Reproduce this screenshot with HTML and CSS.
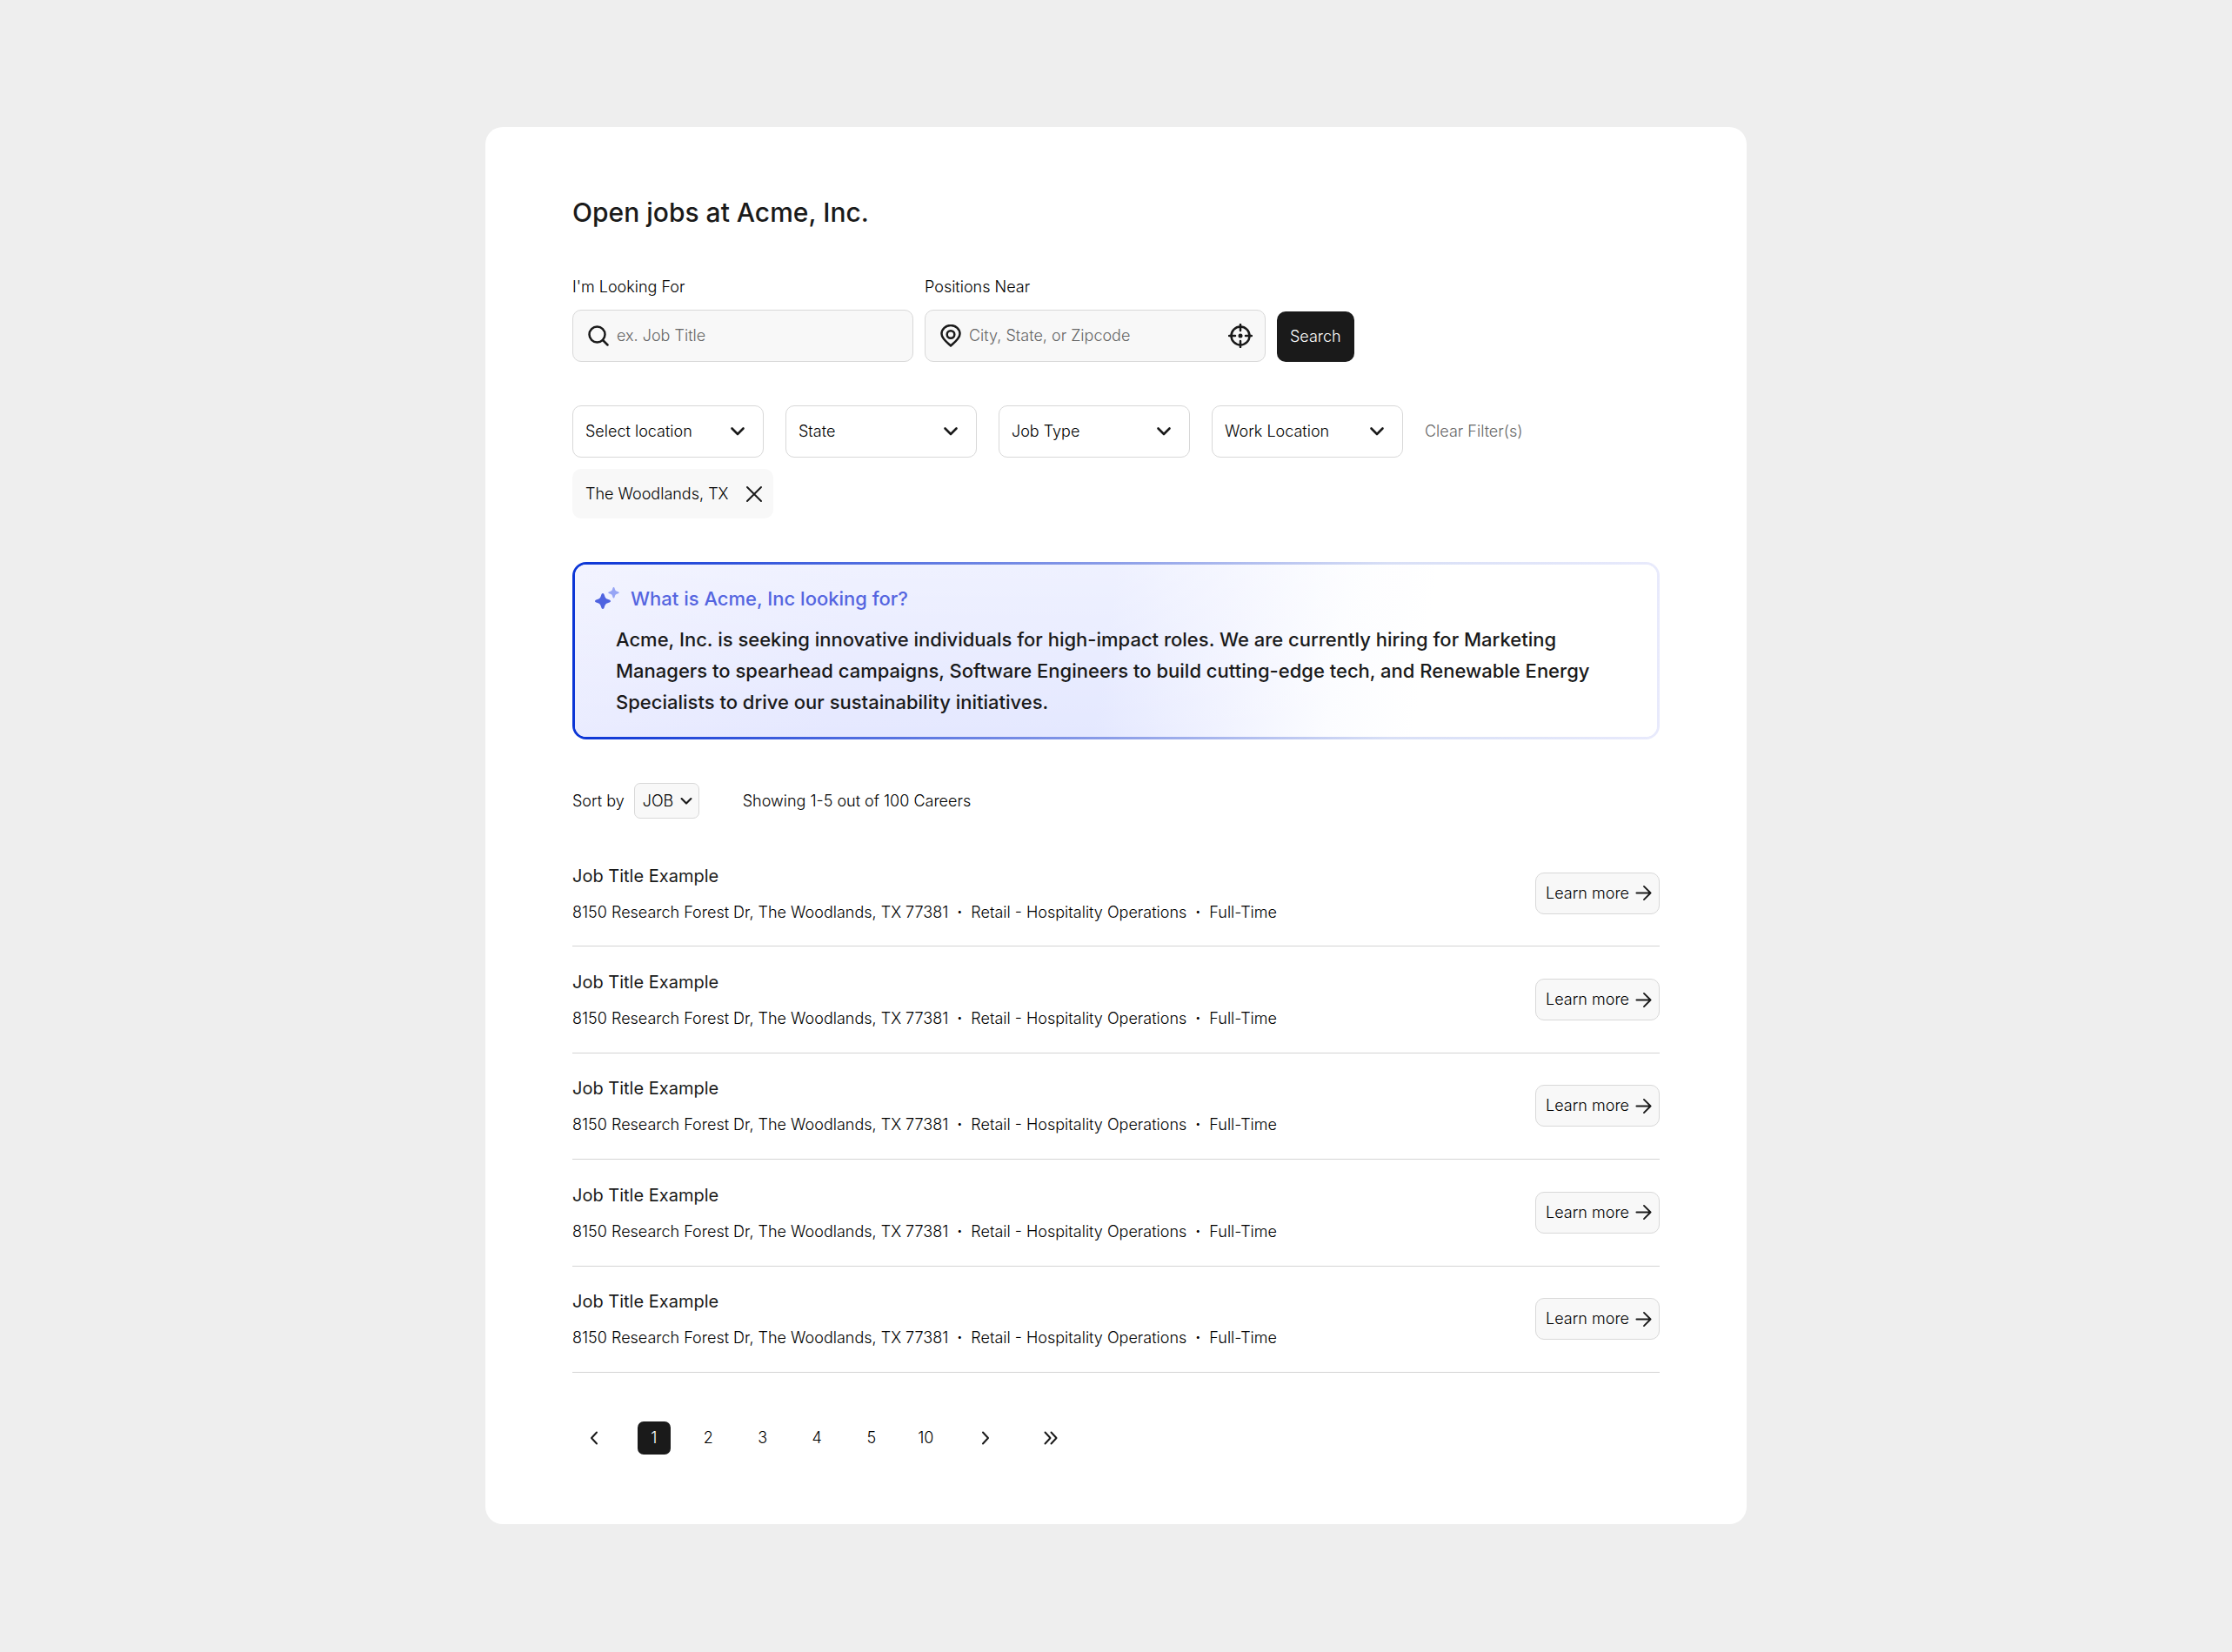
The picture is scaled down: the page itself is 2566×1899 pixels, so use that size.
FILE: index.html
```html
<!DOCTYPE html>
<html lang="en">
<head>
<meta charset="utf-8">
<meta name="viewport" content="width=device-width, initial-scale=1">
<title>Open jobs at Acme, Inc.</title>
<link rel="stylesheet" href="styles.css">
</head>
<body>
<svg class="sprite" aria-hidden="true">
  <symbol id="chevron" viewBox="0 0 24 24"><path d="M5.5 8.5l6.500 6.500 6.500-6.500"/></symbol>
  <symbol id="arrow" viewBox="0 0 20 20"><path d="M1.500 10h17M10.500 2l8 8-8 8"/></symbol>
  <symbol id="angle" viewBox="0 0 20 20"><path d="M7 3.500l6 6.500-6 6.500"/></symbol>
</svg>
<main class="card">
  <h1 class="page-title">Open jobs at Acme, Inc.</h1>

  <form class="search">
    <div class="field">
      <label for="keyword">I'm Looking For</label>
      <div class="textbox">
        <svg class="icon" viewBox="0 0 26 26"><circle cx="11.500" cy="11.500" r="9"/><path d="M18 18l5.500 5.500"/></svg>
        <input id="keyword" type="text" placeholder="ex. Job Title">
      </div>
    </div>
    <div class="field">
      <label for="near">Positions Near</label>
      <div class="textbox">
        <svg class="icon" viewBox="0 0 26 26"><path d="M13 24.500C8.500 20.500 2.500 16 2.500 10.800a10.500 9.800 0 0 1 21 0C23.500 16 17.500 20.500 13 24.500z"/><circle cx="13" cy="11.500" r="4.300"/></svg>
        <input id="near" type="text" placeholder="City, State, or Zipcode">
        <button class="locate" type="button" aria-label="Use my location">
          <svg class="target" viewBox="0 0 28 28"><circle cx="14" cy="14" r="10.500"/><path d="M14 1v7M14 20v7M1 14h7M20 14h7"/><circle class="dot" cx="14" cy="14" r="2.500"/></svg>
        </button>
      </div>
    </div>
    <button class="search-button" type="button">Search</button>
  </form>

  <div class="filters">
    <div class="dropdown">
      <select aria-label="Location"><option>Select location</option></select>
      <svg class="chevron"><use href="#chevron"/></svg>
    </div>
    <div class="dropdown">
      <select aria-label="State"><option>State</option></select>
      <svg class="chevron"><use href="#chevron"/></svg>
    </div>
    <div class="dropdown">
      <select aria-label="Job type"><option>Job Type</option></select>
      <svg class="chevron"><use href="#chevron"/></svg>
    </div>
    <div class="dropdown">
      <select aria-label="Work location"><option>Work Location</option></select>
      <svg class="chevron"><use href="#chevron"/></svg>
    </div>
    <button class="clear" type="button">Clear Filter(s)</button>
  </div>
  <div class="chips">
    <button class="chip" type="button">The Woodlands, TX
      <svg class="close" viewBox="0 0 20 20"><path d="M2 2l16 16M18 2L2 18"/></svg>
    </button>
  </div>

  <section class="insight">
    <h2 class="insight-title">
      <svg class="sparkle" viewBox="0 0 30 26">
        <path class="big" d="M10 7c1 0 1.400.7 1.800 2 .9 3.300 1.700 4.100 5 5.200 1.300.4 2.200.8 2.200 1.800s-.9 1.400-2.200 1.800c-3.300 1.100-4.100 1.900-5 5.200-.4 1.300-.8 2-1.800 2s-1.400-.7-1.800-2c-.9-3.300-1.700-4.100-5-5.200C1.900 17.400 1 17 1 16s.9-1.400 2.200-1.800c3.300-1.100 4.100-1.900 5-5.200C8.600 7.700 9 7 10 7z"/>
        <path class="little" d="M22.500 0c.7 0 1 .7 1.200 1.500.6 2.300 1.200 2.900 3.300 3.500.9.300 1.700.6 1.700 1.300s-.8 1-1.700 1.300c-2.100.6-2.700 1.200-3.300 3.500-.2.800-.5 1.500-1.200 1.500s-1-.7-1.200-1.500c-.6-2.300-1.200-2.900-3.300-3.500-.9-.3-1.700-.6-1.700-1.300s.8-1 1.700-1.300c2.100-.6 2.700-1.200 3.300-3.500.2-.8.500-1.500 1.200-1.500z"/>
      </svg>
      What is Acme, Inc looking for?
    </h2>
    <p class="insight-text">Acme, Inc. is seeking innovative individuals for high-impact roles. We are currently hiring for Marketing Managers to spearhead campaigns, Software Engineers to build cutting-edge tech, and Renewable Energy Specialists to drive our sustainability initiatives.</p>
  </section>

  <div class="toolbar">
    <label for="sort">Sort by</label>
    <div class="dropdown small">
      <select id="sort"><option>JOB</option></select>
      <svg class="chevron"><use href="#chevron"/></svg>
    </div>
    <p class="count">Showing 1-5 out of 100 Careers</p>
  </div>

  <ul class="jobs">
    <li class="job">
      <div class="job-text"><h3>Job Title Example</h3><p class="meta"><span>8150 Research Forest Dr, The Woodlands, TX 77381</span><span>Retail - Hospitality Operations</span><span>Full-Time</span></p></div>
      <a class="more" href="#">Learn more<svg class="arrow"><use href="#arrow"/></svg></a>
    </li>
    <li class="job">
      <div class="job-text"><h3>Job Title Example</h3><p class="meta"><span>8150 Research Forest Dr, The Woodlands, TX 77381</span><span>Retail - Hospitality Operations</span><span>Full-Time</span></p></div>
      <a class="more" href="#">Learn more<svg class="arrow"><use href="#arrow"/></svg></a>
    </li>
    <li class="job">
      <div class="job-text"><h3>Job Title Example</h3><p class="meta"><span>8150 Research Forest Dr, The Woodlands, TX 77381</span><span>Retail - Hospitality Operations</span><span>Full-Time</span></p></div>
      <a class="more" href="#">Learn more<svg class="arrow"><use href="#arrow"/></svg></a>
    </li>
    <li class="job">
      <div class="job-text"><h3>Job Title Example</h3><p class="meta"><span>8150 Research Forest Dr, The Woodlands, TX 77381</span><span>Retail - Hospitality Operations</span><span>Full-Time</span></p></div>
      <a class="more" href="#">Learn more<svg class="arrow"><use href="#arrow"/></svg></a>
    </li>
    <li class="job">
      <div class="job-text"><h3>Job Title Example</h3><p class="meta"><span>8150 Research Forest Dr, The Woodlands, TX 77381</span><span>Retail - Hospitality Operations</span><span>Full-Time</span></p></div>
      <a class="more" href="#">Learn more<svg class="arrow"><use href="#arrow"/></svg></a>
    </li>
  </ul>

  <nav class="pages" aria-label="Pages">
    <a href="#" aria-label="Previous page"><svg class="angle flip"><use href="#angle"/></svg></a>
    <a class="current" href="#" aria-current="page">1</a>
    <a href="#">2</a>
    <a href="#">3</a>
    <a href="#">4</a>
    <a href="#">5</a>
    <a href="#">10</a>
    <a href="#" aria-label="Next page"><svg class="angle"><use href="#angle"/></svg></a>
    <a href="#" aria-label="Last page"><svg class="angle" viewBox="0 0 20 20"><path d="M3.500 3.500l6 6.500-6 6.500M10.500 3.500l6 6.500-6 6.500"/></svg></a>
  </nav>
</main>
</body>
</html>
```
FILE: styles.css
```css
*, *::before, *::after { box-sizing: border-box; }

body {
  margin: 0;
  padding: 146px 24px;
  background: #eee;
  color: #000;
  font: 300 18px/24px Inter, "Liberation Sans", sans-serif;
}

h1, h2, h3, p, ul { margin: 0; padding: 0; font-weight: inherit; }
button, input, select { font: inherit; color: inherit; margin: 0; }
button { cursor: pointer; border: 0; background: none; padding: 0; }
a { color: inherit; text-decoration: none; }
svg { flex: none; fill: none; stroke: #1a1a1a; stroke-width: 2; stroke-linecap: round; stroke-linejoin: round; }
.sprite { display: none; }

.card {
  max-width: 1450px;
  margin: 0 auto;
  padding: 78px 100px 80px;
  border-radius: 20px;
  background: #fff;
}

.page-title { font-size: 30px; line-height: 40px; font-weight: 500; color: #1a1a1a; }

/* Search form */
.search { display: flex; align-items: flex-end; gap: 13px; margin-top: 54px; }
.field { display: flex; flex-direction: column; gap: 14px; flex: 0 1 392px; }
.textbox {
  display: flex;
  align-items: center;
  gap: 8px;
  height: 60px;
  padding: 0 14px 0 16px;
  border: 1px solid #d8d8d8;
  border-radius: 10px;
  background: #f8f8f8;
}
.textbox input { flex: 1; min-width: 0; padding: 0; border: 0; outline: 0; background: none; }
.textbox input::placeholder { color: #666; opacity: 1; }
.icon { width: 26px; height: 26px; stroke-width: 2.5; }
.locate { display: flex; }
.target { width: 28px; height: 28px; stroke-width: 2.5; }
.dot { fill: #1a1a1a; stroke: none; }
.search-button { height: 58px; padding: 0 15px; border-radius: 10px; background: #1a1a1a; color: #fff; }

/* Filters */
.filters { display: flex; flex-wrap: wrap; align-items: center; gap: 25px; margin-top: 50px; }
.dropdown { display: grid; align-items: center; width: 220px; }
.dropdown select, .dropdown .chevron { grid-area: 1 / 1; }
.dropdown select {
  width: 100%;
  height: 60px;
  padding: 0 48px 0 14px;
  border: 1px solid #d8d8d8;
  border-radius: 10px;
  background: #fff;
  appearance: none;
}
.dropdown .chevron { width: 24px; height: 24px; margin-right: 18px; justify-self: end; stroke-width: 2.6; pointer-events: none; }
.clear { color: #666; }
.chips { display: flex; margin-top: 13px; }
.chip { display: flex; align-items: center; gap: 19px; height: 57px; padding: 0 12px 0 15px; border-radius: 10px; background: #f8f8f8; }
.close { width: 20px; height: 20px; }

/* Highlighted summary */
.insight {
  margin-top: 50px;
  padding: 24px 47px 22px;
  border: 3px solid transparent;
  border-radius: 16px;
  background:
    linear-gradient(to bottom, rgb(255 255 255 / 40%), rgb(255 255 255 / 0%)) padding-box,
    linear-gradient(98deg, #eaecff 0%, #e5e8ff 25%, #e4e8ff 49%, #f0f2ff 60%, #fbfcff 70%, #fff 78%) padding-box,
    linear-gradient(#fff, #fff) padding-box,
    linear-gradient(to right, #0b35d6, #8c9ee8 50%, #d8dff6 75%, #e8eafc) border-box;
}
.insight-title { display: flex; align-items: center; gap: 12px; margin-left: -25px; color: #5565e0; font-size: 22px; line-height: 30px; font-weight: 500; }
.sparkle { width: 30px; height: 26px; stroke: none; }
.big { fill: #4f63e0; }
.little { fill: #97a5f5; }
.insight-text { margin-top: 14px; color: #1a1a1a; font-size: 22px; line-height: 36px; font-weight: 500; }

/* Sorting */
.toolbar { display: flex; align-items: center; margin-top: 50px; }
.dropdown.small { width: 75px; margin: 0 50px 0 11px; }
.dropdown.small select { height: 41px; padding: 0 26px 0 9px; border-radius: 7px; background: #f8f8f8; }
.dropdown.small .chevron { width: 20px; height: 20px; margin-right: 5px; }

/* Job list */
.jobs { display: grid; grid-auto-rows: 1fr; min-height: 612px; margin-top: 25px; list-style: none; }
.job { display: flex; align-items: center; justify-content: space-between; gap: 25px; border-bottom: 1px solid #d4d4d4; }
.job-text { padding-top: 1px; }
.job h3 { color: #1a1a1a; font-size: 20px; line-height: 26px; font-weight: 400; }
.meta { display: flex; margin-top: 17px; }
.meta span + span::before { content: "·"; margin: 0 10px; font-weight: 700; }
.more { display: flex; align-items: center; gap: 7px; height: 48px; padding: 0 8px 0 11px; border: 1px solid #d8d8d8; border-radius: 10px; background: #f8f8f8; }
.arrow { width: 19px; height: 19px; }

/* Pagination */
.pages {
  display: grid;
  grid-template-columns: 4fr repeat(6, 3fr) 4fr 4fr;
  gap: 25px;
  max-width: 575px;
  margin-top: 56px;
}
.pages a { display: flex; align-items: center; justify-content: center; height: 38px; border-radius: 7px; }
.pages .current { background: #1a1a1a; color: #fff; }
.angle { width: 20px; height: 20px; }
.flip { transform: scaleX(-1); }
```
